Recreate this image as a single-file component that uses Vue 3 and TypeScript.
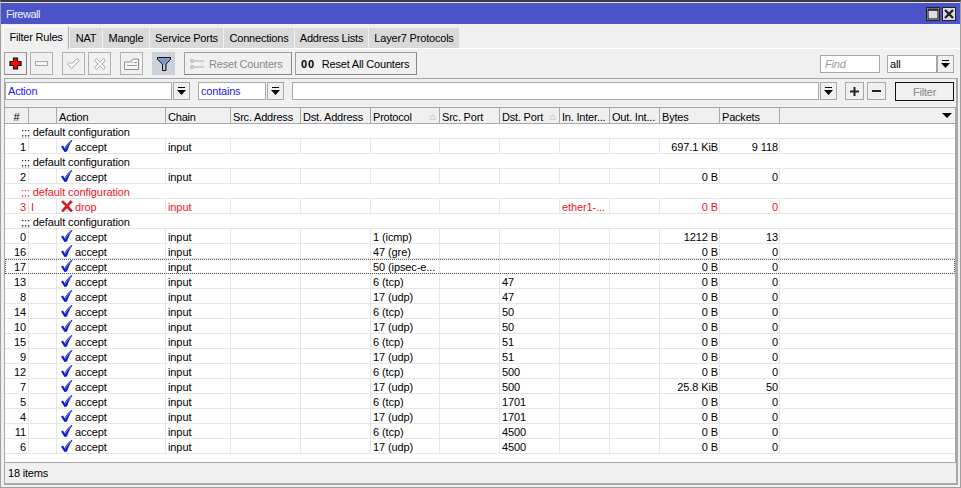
<template>
  <div class="window">
    <div class="titlebar">
      <span class="title">Firewall</span>
      <div class="win-btns">
        <button class="win-btn">
          <svg width="12" height="12" viewBox="0 0 12 12"><rect x="1" y="1" width="10" height="10" fill="none" stroke="#222" stroke-width="1.2" /><path d="M1 2h10" stroke="#222" stroke-width="1.6" /></svg>
        </button>
        <button class="win-btn">
          <svg width="12" height="12" viewBox="0 0 12 12"><path d="M2 2l8 8M10 2l-8 8" stroke="#222" stroke-width="2.4" /></svg>
        </button>
      </div>
    </div>

    <div class="tabs">
      <div v-for="(tab, i) in tabs" :key="tab" class="tab" :class="{ active: i === 0 }" :style="{ width: tabWidths[i] + 'px' }">{{ tab }}</div>
    </div>

    <div class="toolbar">
      <button class="tool">
        <svg width="13" height="13" viewBox="0 0 13 13"><path d="M4.500 1h4v3.500H12v4H8.500V12h-4V8.500H1v-4h3.500z" fill="#f00" stroke="#111" stroke-width="1.2" /></svg>
      </button>
      <button class="tool off">
        <svg width="13" height="6" viewBox="0 0 13 6"><rect x=".5" y=".5" width="12" height="4" fill="#f6f6f6" stroke="#a8a8a8" /></svg>
      </button>
      <button class="tool off gap-left">
        <svg width="13" height="11" viewBox="0 0 13 11"><path d="M.5 6l2-2 2 2L10 .5l2.500 2-8 8z" fill="#f6f6f6" stroke="#aaa" /></svg>
      </button>
      <button class="tool off">
        <svg width="12" height="12" viewBox="0 0 12 12"><path d="M.5 2.500l2-2L6 4l3.500-3.500 2 2L8 6l3.500 3.500-2 2L6 8l-3.500 3.500-2-2L4 6z" fill="#f6f6f6" stroke="#aaa" /></svg>
      </button>
      <button class="tool off gap-left">
        <svg width="15" height="12" viewBox="0 0 15 12"><path d="M.5 4h6l2.500-3h5.500v10.500H.5z" fill="#f6f6f6" stroke="#8c8c8c" /><path d="M7.500 4.500h1M10 4.500h3M3 7.500h10" stroke="#999" /></svg>
      </button>
      <button class="tool pressed gap-left">
        <svg width="14" height="14" viewBox="0 0 14 14"><path d="M.5 .5h13v2L9 7v6.500H5.500V7L.5 2.500z" fill="#7f9ac8" stroke="#111" /><path d="M7 7.500v5.500" stroke="#e8eef8" /></svg>
      </button>
      <button class="tool wide reset">
        <svg width="14" height="10" viewBox="0 0 14 10"><circle cx="2" cy="2" r="1.500" fill="none" stroke="#aaa" /><circle cx="2" cy="8" r="1.500" fill="none" stroke="#aaa" /><path d="M4 2h10M4 8h10" stroke="#aaa" /></svg>
        <span>Reset Counters</span>
      </button>
      <button class="tool wide reset-all">
        <b>00</b>
        <span>Reset All Counters</span>
      </button>
      <div class="spacer"></div>
      <div class="find">Find</div>
      <div class="select all">all</div>
      <button class="arrow"><svg width="9" height="8" viewBox="0 0 9 8"><path d="M1 0h7v1H1zM0 3h9L4.500 8z" fill="#000" /></svg></button>
    </div>

    <div class="panel">
      <div class="filterbar">
        <div class="select action">Action</div>
        <button class="arrow"><svg width="9" height="8" viewBox="0 0 9 8"><path d="M1 0h7v1H1zM0 3h9L4.500 8z" fill="#000" /></svg></button>
        <div class="select contains">contains</div>
        <button class="arrow"><svg width="9" height="8" viewBox="0 0 9 8"><path d="M1 0h7v1H1zM0 3h9L4.500 8z" fill="#000" /></svg></button>
        <div class="select value"></div>
        <button class="arrow"><svg width="9" height="8" viewBox="0 0 9 8"><path d="M1 0h7v1H1zM0 3h9L4.500 8z" fill="#000" /></svg></button>
        <button class="mini plus"><svg width="9" height="9" viewBox="0 0 9 9"><path d="M3.500 0h2v3.500H9v2H5.500V9h-2V5.500H0v-2h3.500z" fill="#222" /></svg></button>
        <button class="mini"><svg width="9" height="2" viewBox="0 0 9 2"><rect width="9" height="2" fill="#222" /></svg></button>
        <button class="filter-btn">Filter</button>
      </div>

      <div class="table">
        <div class="row head">
          <div v-for="col in columns" :key="col.name" class="cell">
            <span>{{ col.name }}</span>
            <svg v-if="col.sort" class="sort" width="7" height="6" viewBox="0 0 7 6"><path d="M3.500 .5L6.500 5.500H.5z" fill="none" stroke="#d0d0d0" /></svg>
          </div>
          <div class="cell rest">
            <svg width="10" height="5" viewBox="0 0 10 5"><path d="M0 0h10L5 5z" fill="#000" /></svg>
          </div>
        </div>
        <template v-for="row in rows" :key="row.id">
          <div v-if="row.comment" class="comment" :class="{ red: row.disabled }">;;; default configuration</div>
          <div class="row" :class="{ red: row.disabled, focus: row.id === '17' }">
            <div class="cell num id">{{ row.id }}</div>
            <div class="cell">{{ row.disabled ? 'I' : '' }}</div>
            <div class="cell act">
              <svg v-if="!row.disabled" width="12" height="12" viewBox="0 0 12 12"><path d="M0 6.500l2-1 1.500 2.500C5 5 7.500 2 10.500 0l1 .5C9 3.500 7.500 7 6 11.500L3.500 12z" fill="#0a1fd0" /><path d="M4 9C5.500 6 7.500 3.500 10 1.500" stroke="#8b98f2" fill="none" /></svg>
              <svg v-else width="12" height="12" viewBox="0 0 12 12"><path d="M.5 2l1.500-1.500L6 4.500 9.500.5l2 1.500L7.500 6l4 4.500-1.500 1.500L6 8l-4 4-1.500-1.500L4.500 6z" fill="#e8141c" stroke="#a01018" stroke-width=".5" /></svg>
              <span>{{ row.disabled ? 'drop' : 'accept' }}</span>
            </div>
            <div class="cell">input</div>
            <div class="cell"></div>
            <div class="cell"></div>
            <div class="cell">{{ row.proto }}</div>
            <div class="cell"></div>
            <div class="cell">{{ row.port }}</div>
            <div class="cell">{{ row.disabled ? 'ether1-...' : '' }}</div>
            <div class="cell"></div>
            <div class="cell num">{{ row.bytes }}</div>
            <div class="cell num">{{ row.packets }}</div>
            <div class="cell rest"></div>
          </div>
        </template>
      </div>

      <div class="status">18 items</div>
    </div>
  </div>
</template>

<script setup lang="ts">
interface Rule {
  id: string
  comment?: boolean
  disabled?: boolean
  proto?: string
  port?: string
  bytes: string
  packets: string
}

const tabs = ['Filter Rules', 'NAT', 'Mangle', 'Service Ports', 'Connections', 'Address Lists', 'Layer7 Protocols']
const tabWidths = [66, 32, 46, 73, 70, 73, 90]

const columns = [
  { name: '#' },
  { name: '' },
  { name: 'Action' },
  { name: 'Chain' },
  { name: 'Src. Address' },
  { name: 'Dst. Address' },
  { name: 'Protocol', sort: true },
  { name: 'Src. Port' },
  { name: 'Dst. Port', sort: true },
  { name: 'In. Inter...' },
  { name: 'Out. Int...' },
  { name: 'Bytes' },
  { name: 'Packets' }
]

const rows: Rule[] = [
  { id: '1', comment: true, bytes: '697.1 KiB', packets: '9 118' },
  { id: '2', comment: true, bytes: '0 B', packets: '0' },
  { id: '3', comment: true, disabled: true, bytes: '0 B', packets: '0' },
  { id: '0', comment: true, proto: '1 (icmp)', bytes: '1212 B', packets: '13' },
  { id: '16', proto: '47 (gre)', bytes: '0 B', packets: '0' },
  { id: '17', proto: '50 (ipsec-e...', bytes: '0 B', packets: '0' },
  { id: '13', proto: '6 (tcp)', port: '47', bytes: '0 B', packets: '0' },
  { id: '8', proto: '17 (udp)', port: '47', bytes: '0 B', packets: '0' },
  { id: '14', proto: '6 (tcp)', port: '50', bytes: '0 B', packets: '0' },
  { id: '10', proto: '17 (udp)', port: '50', bytes: '0 B', packets: '0' },
  { id: '15', proto: '6 (tcp)', port: '51', bytes: '0 B', packets: '0' },
  { id: '9', proto: '17 (udp)', port: '51', bytes: '0 B', packets: '0' },
  { id: '12', proto: '6 (tcp)', port: '500', bytes: '0 B', packets: '0' },
  { id: '7', proto: '17 (udp)', port: '500', bytes: '25.8 KiB', packets: '50' },
  { id: '5', proto: '6 (tcp)', port: '1701', bytes: '0 B', packets: '0' },
  { id: '4', proto: '17 (udp)', port: '1701', bytes: '0 B', packets: '0' },
  { id: '11', proto: '6 (tcp)', port: '4500', bytes: '0 B', packets: '0' },
  { id: '6', proto: '17 (udp)', port: '4500', bytes: '0 B', packets: '0' }
]
</script>

<style>
html,
body {
  margin: 0;
  background: #f0f0f0;
  overflow: hidden;
}
</style>

<style scoped>
.window {
  width: 961px;
  height: 488px;
  box-sizing: border-box;
  display: flex;
  flex-direction: column;
  background: #f0f0f0;
  border: 1px solid #a0a0a0;
  border-top: 2px solid #3a3a3a;
  font: 11px "Liberation Sans", Arial, sans-serif;
  letter-spacing: -0.2px;
  color: #000;
  overflow: hidden;
}

button {
  font: inherit;
  letter-spacing: inherit;
  padding: 0;
  margin: 0;
  display: flex;
  align-items: center;
  justify-content: center;
  background: #f0f0f0;
}

.titlebar {
  height: 22px;
  flex: none;
  box-sizing: border-box;
  background: #4c52c8;
  border-top: 1px solid #e0e0e0;
  display: flex;
  align-items: center;
  justify-content: space-between;
  padding: 0 4px 0 5px;
  color: #f2f2fa;
}

.title {
  letter-spacing: -0.5px;
}

.win-btns {
  display: flex;
  gap: 2px;
}

.win-btn {
  width: 14px;
  height: 14px;
  border: 1px solid #222;
  background: #dcdce4;
}

.tabs {
  display: flex;
  gap: 1px;
  height: 25px;
  flex: none;
  box-sizing: border-box;
  padding-left: 2px;
  border-bottom: 1px solid #fff;
  align-items: flex-end;
}

.tab {
  height: 20px;
  box-sizing: border-box;
  background: #d9d9d9;
  text-align: center;
  line-height: 21px;
  white-space: nowrap;
}

.tab.active {
  height: 23px;
  line-height: 20px;
  background: #f0f0f0;
  border-top: 1px solid #fff;
  border-right: 1px solid #aaa;
  border-left: 1px solid #fff;
  margin-bottom: -1px;
}

.toolbar {
  height: 29px;
  flex: none;
  box-sizing: border-box;
  display: flex;
  align-items: center;
  padding: 3px 6px 3px 3px;
  gap: 3px;
}

.tool {
  width: 23px;
  height: 23px;
  box-sizing: border-box;
  border: 1px solid #a0a0a0;
  border-right-color: #888;
  border-bottom-color: #888;
}

.tool.off {
  border-color: #b0b0b0;
}

.gap-left {
  margin-left: 6px;
}

.tool.pressed {
  background: #ccd0d8;
  border-color: #ccd0d8;
}

.tool.wide {
  justify-content: flex-start;
  padding: 1px 0 0 5px;
}

.reset {
  width: 108px;
  margin-left: 6px;
  gap: 5px;
  color: #8a8a8a;
}

.reset-all {
  width: 122px;
  gap: 7px;
}

.reset-all b {
  letter-spacing: 0.8px;
}

.spacer {
  flex: 1;
}

.find {
  width: 60px;
  height: 18px;
  box-sizing: border-box;
  border: 1px solid #a8a8a8;
  background: #fff;
  color: #9a9a9a;
  font-style: italic;
  line-height: 17px;
  padding-left: 4px;
  margin-right: 4px;
}

.select {
  height: 18px;
  box-sizing: border-box;
  border: 1px solid #a8a8a8;
  background: #fff;
  line-height: 17px;
  padding-left: 2px;
  color: #2222ee;
}

.select.all {
  width: 50px;
  color: #000;
  margin-right: -3px;
}

.arrow {
  width: 17px;
  height: 18px;
  flex: none;
  box-sizing: border-box;
  border: 1px solid #a8a8a8;
}

.panel {
  flex: 1;
  min-height: 0;
  display: flex;
  flex-direction: column;
  margin: 0 2px 2px 3px;
  border: 0 solid #a8a8a8;
  border-width: 1px 2px 2px 1px;
}

.filterbar {
  height: 22px;
  flex: none;
  box-sizing: border-box;
  padding-top: 3px;
  display: flex;
  align-items: flex-start;
}

.action {
  width: 167px;
  margin-right: 1px;
}

.contains {
  width: 68px;
  margin-left: 8px;
  margin-right: 1px;
}

.value {
  width: 527px;
  margin-left: 8px;
  margin-right: 1px;
}

.mini {
  width: 19px;
  height: 18px;
  box-sizing: border-box;
  border: 1px solid #a8a8a8;
  margin-left: 3px;
}

.plus {
  margin-left: 8px;
}

.filter-btn {
  width: 59px;
  height: 19px;
  box-sizing: border-box;
  border: 1px solid #111;
  margin-left: 9px;
  color: #888;
}

.table {
  flex: 1;
  margin-top: 6px;
  background: #fff;
  border-bottom: 1px solid #a8a8a8;
  border-right: 1px solid #a8a8a8;
  min-height: 0;
  letter-spacing: -0.1px;
}

.row {
  display: grid;
  grid-template-columns: 24px 28px 109px 65px 70px 70px 69px 60px 60px 50px 50px 60px 60px 1fr;
  height: 15px;
  box-sizing: border-box;
  border-bottom: 1px solid #e6e6e6;
  line-height: 14px;
}

.cell {
  box-sizing: border-box;
  border-right: 1px solid #e6e6e6;
  padding: 2px 2px 0;
  white-space: nowrap;
  overflow: hidden;
  display: flex;
  align-items: center;
}

.cell.num {
  justify-content: flex-end;
  padding-right: 1px;
}

.cell.id {
  padding-right: 2px;
}

.cell.rest {
  border-right: 0;
  justify-content: flex-end;
  padding-right: 3px;
}

.head {
  height: 17px;
  background: #f0f0f0;
  border-top: 1px solid #a8a8a8;
  border-bottom: 1px solid #a8a8a8;
  letter-spacing: -0.2px;
}

.head .cell {
  border-right-color: #a8a8a8;
  justify-content: space-between;
}

.head .cell:first-child {
  justify-content: center;
}

.head .cell.rest {
  justify-content: flex-end;
  padding-top: 0;
}

.sort {
  margin-right: 1px;
}

.act {
  gap: 2px;
  padding-left: 4px;
  padding-top: 0;
}

.act span {
  padding-top: 2px;
}

.comment {
  height: 15px;
  box-sizing: border-box;
  border-bottom: 1px solid #e6e6e6;
  line-height: 16px;
  padding-left: 16px;
}

.red {
  color: #f0141e;
}

.focus {
  outline: 1px dotted #555;
  outline-offset: -1px;
}

.status {
  height: 20px;
  flex: none;
  line-height: 21px;
  padding-left: 3px;
}
</style>
